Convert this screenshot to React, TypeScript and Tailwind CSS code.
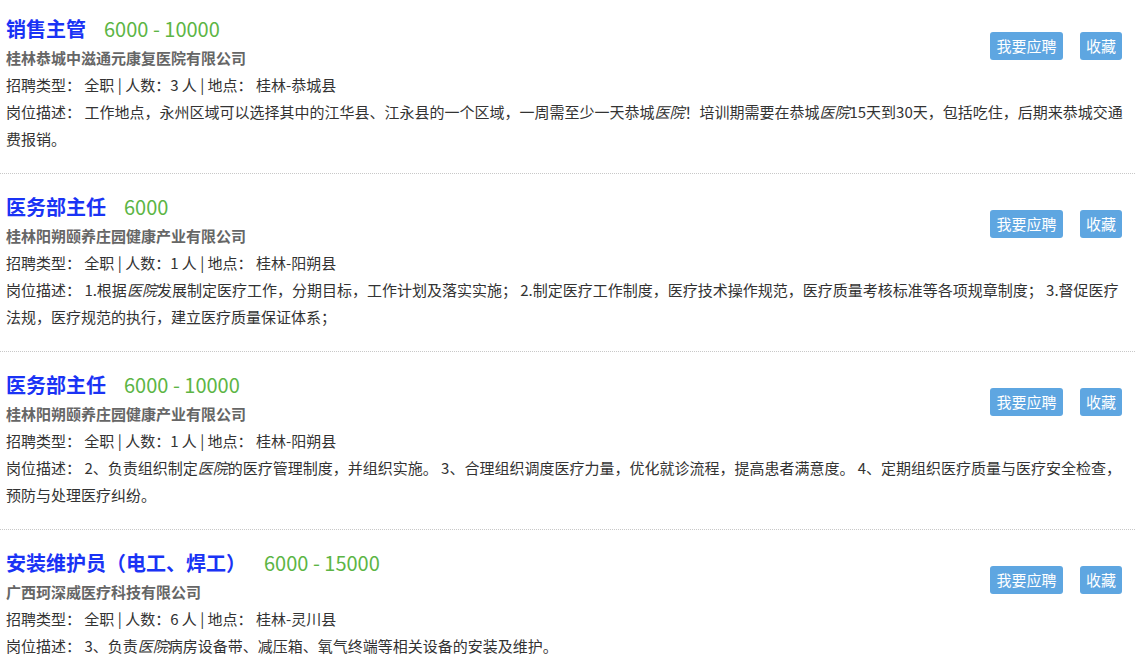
import React from 'react';

type Job = {
    title: string;
    salary: string;
    company: string;
    count: number;
    place: string;
    desc: React.ReactNode;
};

const H = () => <em>医院</em>;

const jobs: Job[] = [
    {
        title: '销售主管',
        salary: '6000 - 10000',
        company: '桂林恭城中滋通元康复医院有限公司',
        count: 3,
        place: '桂林-恭城县',
        desc: (
            <>
                工作地点，永州区域可以选择其中的江华县、江永县的一个区域，一周需至少一天恭城<H />！培训期需要在恭城<H />15天到30天，包括吃住，后期来恭城交通费报销。
            </>
        ),
    },
    {
        title: '医务部主任',
        salary: '6000',
        company: '桂林阳朔颐养庄园健康产业有限公司',
        count: 1,
        place: '桂林-阳朔县',
        desc: (
            <>
                1.根据<H />发展制定医疗工作，分期目标，工作计划及落实实施； 2.制定医疗工作制度，医疗技术操作规范，医疗质量考核标准等各项规章制度； 3.督促医疗法规，医疗规范的执行，建立医疗质量保证体系；
            </>
        ),
    },
    {
        title: '医务部主任',
        salary: '6000 - 10000',
        company: '桂林阳朔颐养庄园健康产业有限公司',
        count: 1,
        place: '桂林-阳朔县',
        desc: (
            <>
                2、负责组织制定<H />的医疗管理制度，并组织实施。 3、合理组织调度医疗力量，优化就诊流程，提高患者满意度。 4、定期组织医疗质量与医疗安全检查，预防与处理医疗纠纷。
            </>
        ),
    },
    {
        title: '安装维护员（电工、焊工）',
        salary: '6000 - 15000',
        company: '广西珂深威医疗科技有限公司',
        count: 6,
        place: '桂林-灵川县',
        desc: (
            <>
                3、负责<H />病房设备带、减压箱、氧气终端等相关设备的安装及维护。
            </>
        ),
    },
];

const JobItem = ({ job }: { job: Job }) => (
    <div className="pt-[18px] first:pt-[14px] pb-[21px] px-[6px] border-b border-dotted border-[#c8c8c8]">
        <div className="flex items-start justify-between">
            <div>
                <div className="flex items-baseline h-[30px] leading-[30px]">
                    <span className="text-[20px] font-bold text-[#1a33f5]">{job.title}</span>
                    <span className="ml-[18px] text-[20px] text-[#5cb545]">{job.salary}</span>
                </div>
                <div className="text-[15px] leading-[27px] font-bold text-[#666]">{job.company}</div>
                <div className="text-[15px] leading-[27px] text-[#333]">
                    招聘类型：&nbsp;全职 | 人数：{job.count} 人 | 地点：&nbsp;{job.place}
                </div>
            </div>
            <div className="flex gap-[17px] mt-[18px] mr-[7px]">
                <button className="h-[28px] w-[73px] rounded-[3px] bg-[#5ea6e1] text-white text-[15px]">我要应聘</button>
                <button className="h-[28px] w-[42px] rounded-[3px] bg-[#5ea6e1] text-white text-[15px]">收藏</button>
            </div>
        </div>
        <div className="text-[15px] leading-[27px] text-[#333]">
            岗位描述：&nbsp;{job.desc}
        </div>
    </div>
);

export default function App() {
    return (
        <div
            className="w-[1135px] h-[663px] overflow-hidden bg-white"
            style={{ fontFamily: '"Noto Sans CJK SC", sans-serif' }}
        >
            {jobs.map((job, i) => (
                <JobItem key={i} job={job} />
            ))}
        </div>
    );
}
